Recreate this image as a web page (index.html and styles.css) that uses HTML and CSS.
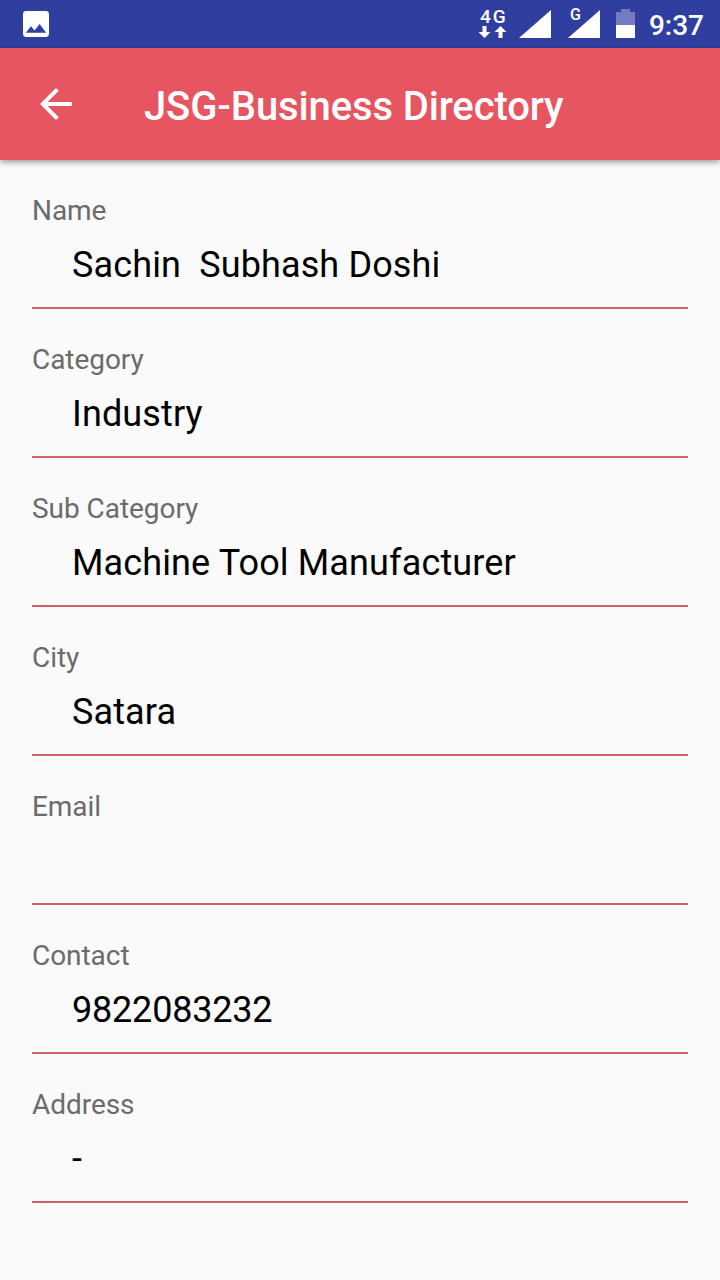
FILE: index.html
```
<!DOCTYPE html>
<html lang="en">

<head>
    <meta charset="UTF-8">
    <meta name="viewport" content="width=device-width, initial-scale=1.0">
    <title>JSG-Business Directory</title>
    <link rel="stylesheet" href="styles.css">
</head>

<body>

    <div class="status_bar">
        <svg class="picture" width="26" height="26" viewBox="3 3 18 18">
            <path fill="#fff" d="M21 19V5c0-1.1-.9-2-2-2H5c-1.1 0-2 .9-2 2v14c0 1.1.9 2 2 2h14c1.1 0 2-.9 2-2zM8.5 13.5l2.5 3.01L14.5 12l4.5 6H5l3.500-4.500z"/>
        </svg>

        <div class="network">
            <span>4G</span>
            <svg width="29" height="12" viewBox="0 0 29 12" fill="#fff">
                <path d="M4.500 0h4v6h4l-6 6-6-6h4z"/>
                <path d="M20.500 12h4V6h4l-6-6-6 6h4z"/>
            </svg>
        </div>

        <svg class="signal" width="32" height="28" viewBox="0 0 32 28">
            <path fill="#fff" d="M0 28L32 0v28z"/>
        </svg>

        <div class="signal_roaming">
            <svg width="32" height="28" viewBox="0 0 32 28">
                <path fill="#fff" d="M0 28L32 0v28z"/>
            </svg>
            <span>G</span>
        </div>

        <svg class="battery" width="19" height="29" viewBox="0 0 19 29">
            <path fill="#757bbf" d="M0 3h5V0h9v3h5v13H0z"/>
            <path fill="#fff" d="M0 16h19v13H0z"/>
        </svg>

        <span class="time">9:37</span>
    </div>

    <header class="app_bar">
        <svg width="48" height="48" viewBox="0 0 24 24">
            <path fill="#fff" d="M20 11H7.830l5.590-5.590L12 4l-8 8 8 8 1.410-1.410L7.830 13H20v-2z"/>
        </svg>
        <h1>JSG-Business Directory</h1>
    </header>

    <main class="details">
        <div class="field">
            <div class="label">Name</div>
            <div class="value">Sachin  Subhash Doshi</div>
        </div>
        <div class="field">
            <div class="label">Category</div>
            <div class="value">Industry</div>
        </div>
        <div class="field">
            <div class="label">Sub Category</div>
            <div class="value">Machine Tool Manufacturer</div>
        </div>
        <div class="field">
            <div class="label">City</div>
            <div class="value">Satara</div>
        </div>
        <div class="field">
            <div class="label">Email</div>
            <div class="value"></div>
        </div>
        <div class="field">
            <div class="label">Contact</div>
            <div class="value number">9822083232</div>
        </div>
        <div class="field">
            <div class="label">Address</div>
            <div class="value">-</div>
        </div>
    </main>

</body>

</html>
```
FILE: styles.css
```
*{
    box-sizing: border-box;
}

body{
    margin: 0;
    min-height: 1280px;
    background-color: #fafafa;
    font-family: Roboto, sans-serif;
}

svg{
    display: block;
    flex-shrink: 0;
}

.status_bar{
    display: flex;
    align-items: flex-start;
    height: 48px;
    padding: 0 16px 0 23px;
    background-color: #303f9f;
    color: white;
    font-weight: 500;
}

.picture{
    margin-top: 11px;
    margin-right: auto;
}

.network{
    width: 30px;
    margin-top: 8px;
    margin-right: 11px;
}

.network span{
    display: block;
    height: 18px;
    padding-left: 2px;
    font-size: 19px;
    line-height: 18px;
    letter-spacing: 2px;
    white-space: nowrap;
}

.signal{
    margin-top: 10px;
    margin-right: 17px;
}

.signal_roaming{
    position: relative;
    margin-top: 10px;
    margin-right: 16px;
}

.signal_roaming span{
    position: absolute;
    left: 2px;
    top: -4px;
    font-size: 16px;
    line-height: 18px;
}

.battery{
    margin-top: 9px;
    margin-right: 14px;
}

.time{
    font-size: 28px;
    line-height: 52px;
}

.app_bar{
    display: flex;
    align-items: center;
    gap: 64px;
    height: 112px;
    padding: 0 32px;
    background-color: #e65560;
    color: white;
    box-shadow: 0 2px 6px rgba(0, 0, 0, 0.4);
}

.app_bar h1{
    margin: 6px 0 0;
    font-size: 40px;
    font-weight: 500;
    line-height: 48px;
    letter-spacing: -0.13px;
}

.details{
    display: flex;
    flex-direction: column;
    gap: 32px;
    padding: 32px;
}

.field{
    height: 117px;
    border-bottom: 2px solid #d0606b;
}

.label{
    color: #6b6b6b;
    font-size: 28px;
    line-height: 37px;
    letter-spacing: -0.05px;
}

.value{
    margin-top: 15px;
    padding-left: 40px;
    color: black;
    font-size: 36px;
    line-height: 42px;
    letter-spacing: 0.13px;
    white-space: pre;
}

.number{
    letter-spacing: -0.2px;
}
```
